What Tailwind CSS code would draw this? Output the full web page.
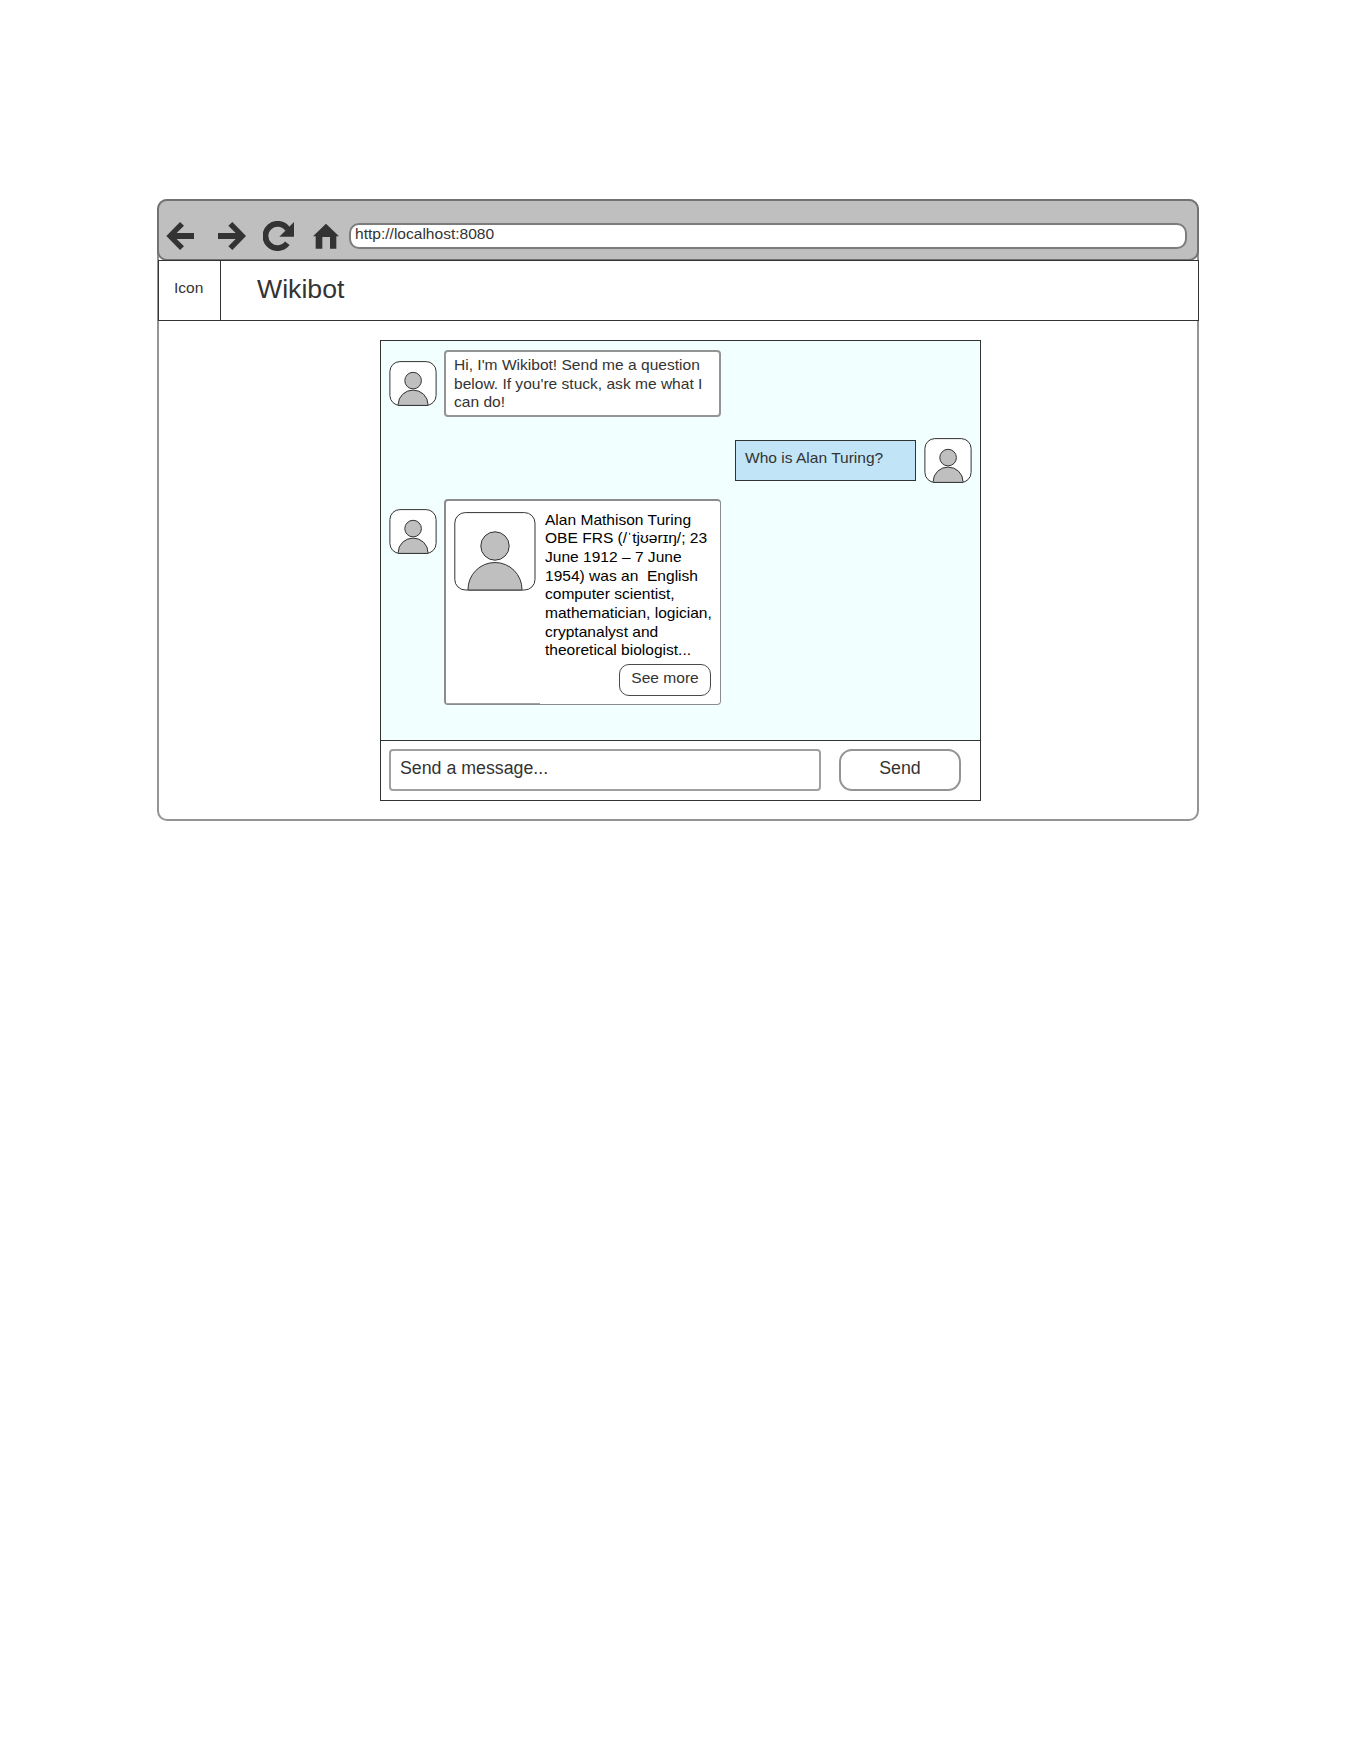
<!DOCTYPE html>
<html lang="en">
<head>
<meta charset="utf-8">
<title>Wikibot</title>
<script src="https://cdn.jsdelivr.net/npm/@tailwindcss/browser@4"></script>
</head>
<body class="bg-white">
<svg class="hidden">
  <symbol id="avatar" viewBox="0 0 48 45">
    <rect x=".9" y=".6" width="46.2" height="43.8" rx="10" fill="#fff" stroke="#333"/>
    <path d="M9.2 44.4v-.9a14.9 14.4 0 0 1 29.8 0v.9z" fill="#bfbfbf" stroke="#333"/>
    <circle cx="24.1" cy="19.6" r="8.3" fill="#bfbfbf" stroke="#333"/>
  </symbol>
</svg>
<main class="h-[1760px] w-[1360px] pt-[199px] pl-[157px] font-['Liberation_Sans',Arial,sans-serif] text-[15.56px] leading-[18.67px] text-[#333]">
  <div class="flex h-[622px] w-[1042px] flex-col rounded-[10px] border-2 border-[#949494]">
    <!-- browser toolbar -->
    <div class="-mx-0.5 -mt-0.5 flex h-[62px] shrink-0 rounded-[10px] border-2 border-[#727272] bg-[#bfbfbf] pt-[20px] pl-[7px]">
      <svg class="h-[30px] w-[28px] shrink-0" viewBox="48 93 84 90" fill="#333"><path d="M49 138 90 96l12 11-22 22h52v18H80l22 22-12 11z"/></svg>
      <svg class="ml-[24px] h-[30px] w-[28px] shrink-0" viewBox="204 93 84 90" fill="#333"><path d="M288 138 247 96l-12 11 22 22h-53v18h53l-22 22 12 11z"/></svg>
      <svg class="ml-[17px] h-[32px] w-[32px] shrink-0" viewBox="339 93 96 96"><path d="M412 160A36.5 36.5 0 1 1 413 117.500" fill="none" stroke="#333" stroke-width="17.5"/><path d="M432 96v44h-44z" fill="#333"/></svg>
      <svg class="ml-[18px] h-[30px] w-[26px] shrink-0" viewBox="489 93 78 90" fill="#333"><path d="m528 101 39 38h-8v37h-19v-35h-23v35h-20v-37h-8z"/></svg>
      <div class="mt-[2px] ml-[10px] h-[26px] w-[838px] rounded-[10px] border-2 border-[#7c7c7c] bg-white pl-[4px] leading-[18px]">http://localhost:8080</div>
    </div>
    <!-- site header -->
    <header class="-mt-px -mr-0.5 -ml-px flex h-[61px] shrink-0 border border-[#333] bg-white">
      <div class="w-[62px] border-r border-[#333] pt-[18px] pl-[15px]">Icon</div>
      <h1 class="pt-[12px] pl-[36px] text-[26.67px] leading-[32px]">Wikibot</h1>
    </header>
    <!-- chat panel -->
    <section class="mt-[19px] ml-[221px] flex h-[461px] w-[601px] shrink-0 flex-col border border-[#333] bg-white">
      <div class="flex h-[400px] shrink-0 flex-col border-b border-[#333] bg-[#f2ffff]">
        <div class="flex pt-[9px] pl-[8px]">
          <svg class="mt-[11px] h-[45px] w-[48px]"><use href="#avatar"/></svg>
          <div class="ml-[7px] h-[67px] w-[277px] rounded-[4px] border-2 border-[#949494] bg-white pt-[4px] pl-[8px]">Hi, I'm Wikibot! Send me a question<br>below. If you're stuck, ask me what I<br>can do!</div>
        </div>
        <div class="mt-[21px] flex pl-[354px]">
          <div class="mt-[2px] h-[41px] w-[181px] border border-[#333] bg-[#c1e4f7] pt-[8px] pl-[9px]">Who is Alan Turing?</div>
          <svg class="ml-[8px] h-[45px] w-[48px]"><use href="#avatar"/></svg>
        </div>
        <div class="mt-[16px] flex pl-[8px]">
          <svg class="mt-[10px] h-[45px] w-[48px]"><use href="#avatar"/></svg>
          <div class="ml-[7px] flex h-[206px] w-[277px] flex-col rounded-[4px] border border-t-2 border-l-2 border-[#8c8c8c] bg-white">
            <div class="flex pl-[8px]">
              <svg class="mt-[11px] h-[79px] w-[82px] shrink-0" viewBox="0 0 82 79">
                <rect x=".8" y=".6" width="80.2" height="77.4" rx="10.5" fill="#fff" stroke="#333"/>
                <path d="M14 78v-.5a27 27 0 0 1 54 0v.5z" fill="#bfbfbf" stroke="#333"/>
                <circle cx="41" cy="34" r="14.2" fill="#bfbfbf" stroke="#333"/>
              </svg>
              <p class="ml-[9px] pt-[9.5px] whitespace-pre text-black">Alan Mathison Turing
OBE FRS (/ˈtjʊərɪŋ/; 23
June 1912 – 7 June
1954) was an  English
computer scientist,
mathematician, logician,
cryptanalyst and
theoretical biologist...</p>
            </div>
            <button class="mt-[4.5px] ml-[173px] h-[32px] w-[92px] shrink-0 rounded-[10px] border border-[#4a4a4a] pb-[4px]">See more</button>
            <div class="mt-auto h-px w-[94px] bg-[#a0a0a0]"></div>
          </div>
        </div>
      </div>
      <div class="flex pt-[8px] pl-[8px] text-[17.78px] leading-[21.33px]">
        <div class="h-[42px] w-[432px] rounded-[4px] border-2 border-[#a0a0a0] pt-[7px] pl-[9px]">Send a message...</div>
        <button class="ml-[18px] h-[42px] w-[122px] rounded-[13px] border-2 border-[#949494] pb-[2px]">Send</button>
      </div>
    </section>
  </div>
</main>
</body>
</html>
